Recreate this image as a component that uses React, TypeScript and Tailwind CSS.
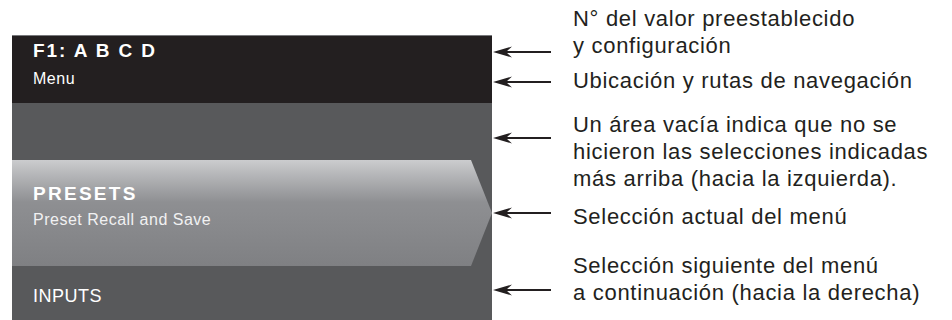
import React from 'react';

const font = { fontFamily: '"Liberation Sans", Arial, sans-serif' };

const Arrow: React.FC<{ offset: string }> = ({ offset }) => (
  <div className={`shrink-0 ${offset}`}>
    <svg width="58" height="12" viewBox="0 0 58 12">
      <line x1="10" y1="6" x2="58" y2="6" stroke="#231f20" strokeWidth="2" />
      <path d="M0 6 L19 0.5 L13 6 L19 11.5 Z" fill="#231f20" />
    </svg>
  </div>
);

type Note = { lines: string[]; gap: string; arrow: string };

const notes: Note[] = [
  { lines: ['N° del valor preestablecido', 'y configuración'], gap: 'mt-[5px]', arrow: 'mt-[41px]' },
  { lines: ['Ubicación y rutas de navegación'], gap: 'mt-[8px]', arrow: 'mt-[9px]' },
  {
    lines: ['Un área vacía indica que no se', 'hicieron las selecciones indicadas', 'más arriba (hacia la izquierda).'],
    gap: 'mt-[17px]',
    arrow: 'mt-[21px]',
  },
  { lines: ['Selección actual del menú'], gap: 'mt-[11px]', arrow: 'mt-[4px]' },
  { lines: ['Selección siguiente del menú', 'a continuación (hacia la derecha)'], gap: 'mt-[22px]', arrow: 'mt-[32px]' },
];

const App: React.FC = () => {
  return (
    <div className="w-[952px] h-[320px] bg-white overflow-hidden flex" style={font}>
      {/* device screen */}
      <div className="ml-[12px] mt-[35px] w-[480px] shrink-0 flex flex-col bg-[#58595b]">
        <div className="h-[68px] bg-[#231f20] border-t border-[#77787b] pl-[21px] pt-[4px] text-white">
          <div className="text-[19px] leading-[22px] font-bold tracking-[0.1em]">F1: A B C D</div>
          <div className="mt-[7px] text-[16px] leading-[19px] tracking-[0.5px]">Menu</div>
        </div>
        <div className="h-[57px]" />
        <div className="h-[106px] pl-[21px] pt-[23px] text-white bg-gradient-to-b from-[#cbccce] via-[#8e8f92] via-40% to-[#7f8083] [clip-path:polygon(0_0,459px_0,100%_50%,459px_100%,0_100%)]">
          <div className="text-[19px] leading-[22px] font-bold tracking-[0.12em]">PRESETS</div>
          <div className="mt-[5px] text-[16px] leading-[19px] tracking-[0.5px] text-[#f1f1f2]">Preset Recall and Save</div>
        </div>
        <div className="h-[54px] pl-[21px] pt-[19px] text-white">
          <div className="text-[18px] leading-[22px] tracking-[0.5px]">INPUTS</div>
        </div>
      </div>

      {/* callouts */}
      <div className="ml-[1px] flex flex-col text-[#231f20]">
        {notes.map((n, i) => (
          <div key={i} className={`flex ${n.gap}`}>
            <Arrow offset={n.arrow} />
            <div className="ml-[22px] text-[22px] leading-[27px] tracking-[0.7px] whitespace-nowrap">
              {n.lines.map((l, j) => (
                <div key={j}>{l}</div>
              ))}
            </div>
          </div>
        ))}
      </div>
    </div>
  );
};

export default App;
